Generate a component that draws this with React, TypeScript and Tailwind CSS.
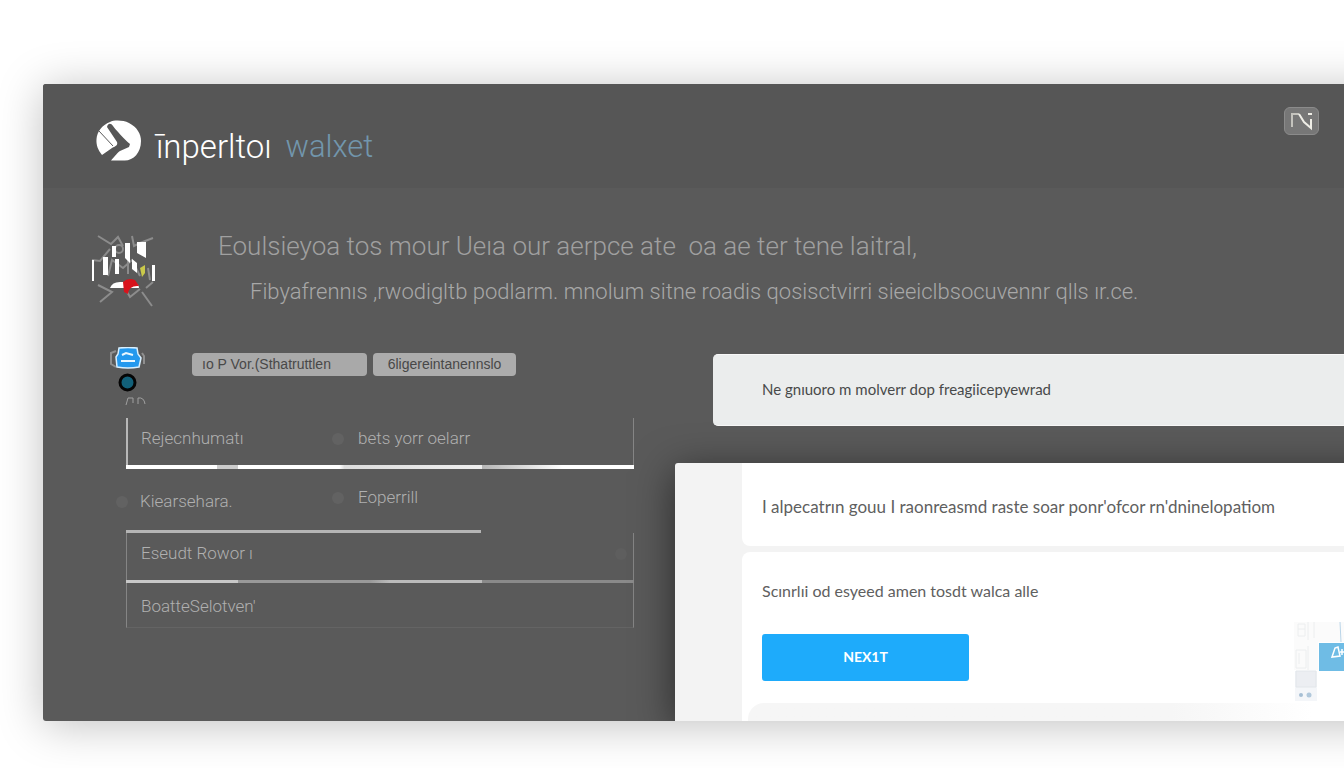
import React from 'react';

function BrandLogo() {
  return (
    <svg viewBox="0 0 46 42" className="h-[42px] w-[46px] shrink-0" aria-hidden="true">
      <path
        fill="#ffffff"
        d="M14 2 C18 0 27 0 33 3 C41 7 45 14 45 21 C45 33 37 41 28 40.500 L15 40.500 C19 36 22 32 24 31 L33 27 L34 24 C27 18 20 10 17 6 C15 3 12 3 11 7 L21 22 C22 25 20 26 16 28 L6 35 C2 30 0 25 0.500 19 C1 12 6 5 14 2 Z"
      />
      <path d="M3 11 L17 26" stroke="#595959" strokeWidth="1" fill="none" />
    </svg>
  );
}

function MascotIcon() {
  return (
    <svg viewBox="0 0 70 76" className="h-[76px] w-[70px] shrink-0" aria-hidden="true">
      <g stroke="#8c8c8c" strokeWidth="2" fill="none">
        <path d="M8 4 L21 12 L28 5 L33 14 M42 4 L44 14 L50 11 L63 6" />
        <path d="M2 28 L10 29 L20 17 M8 53 L22 60 L10 70 M36 58 L40 65 L50 57 M52 60 L62 74" />
        <path d="M18 44 L22 28 L33 36 L42 28 L50 44 M38 24 V42 M58 36 L60 48 M56 56 L63 50" />
        <circle cx="29" cy="17" r="4" />
      </g>
      <g fill="#ffffff">
        <path d="M22 14 h4 v11 h-4 Z M35 11 h5 v20 l-5 -5 Z M47 10 h9 v16 l-9 -5 Z" />
        <path d="M13 25 h5 v18 h-5 Z M2 28 h2 v21 h-2 Z M25 27 h4 v15 h-4 Z M42 27 l5 4 v10 l-5 -4 Z M62 33 h3 v16 h-3 Z" />
        <path d="M20 56 Q22 50 30 50 H44 Q49 52 49 56 Z" />
      </g>
      <path d="M50 36 L55 33 V41 L52 45 Z" fill="#c9c84a" />
      <path d="M33 50 Q38 45 45 48 L49 54 Q39 53 38 62 L34 60 Z" fill="#d8131c" />
    </svg>
  );
}

function StepIcons() {
  return (
    <svg viewBox="0 0 38 60" className="h-[60px] w-[38px] shrink-0" aria-hidden="true">
      <path d="M6 4 L1 6 V17 L6 20 M32 6 L34 9 V17" stroke="#8f8f8f" strokeWidth="2" fill="none" />
      <path d="M9 1 Q18 0 27 1 L28 7 L31 11 L29 20 Q18 22 7 20 L6 10 L8 7 Z" fill="#2499ee" stroke="#d9f0ff" strokeWidth="1.500" />
      <path d="M12 8 L16 6 L23 8 M11 14 H25" stroke="#e9f7ff" strokeWidth="2" fill="none" />
      <circle cx="17.500" cy="35.500" r="7.500" fill="#126079" stroke="#050505" strokeWidth="3" />
      <path d="M16 58 L18 51 H23 V56 M28 57 V51 Q34 50 35 57" stroke="#a0a0a0" strokeWidth="1" fill="none" />
    </svg>
  );
}

function DeviceArt() {
  return (
    <svg viewBox="0 0 50 80" className="h-[80px] w-[50px]" aria-hidden="true">
      <path d="M0 0 H50 V20 H24 V48 H0 Z" fill="#fbfbfb" />
      <g stroke="#eceeef" fill="none">
        <path d="M4 2 h7 v12 h-7 Z M4 7 h7 M14 0 V18 M20 0 V16" />
        <path d="M2 28 h10 v18 h-10 Z M5 31 v11 M14 24 V48" />
      </g>
      <path d="M1 49 H23 V79 H1 Z" fill="#f4f6f9" />
      <path d="M2 49 H22 V65 H2 Z" fill="#eceef2" stroke="#e2e6ea" />
      <circle cx="7" cy="73" r="2" fill="#a6bfd4" />
      <circle cx="15" cy="73" r="2.500" fill="#b1c8db" />
      <path d="M46 0 L47 20" stroke="#b9d4e8" />
      <rect x="25" y="21" width="25" height="28" fill="#6fbce5" />
      <path d="M38 35 L41 26 L44 25 L46 34 Z M48 27 V33 M46 30 H50" stroke="#ffffff" strokeWidth="1.500" fill="none" />
    </svg>
  );
}

function Dot({ faint = false }: { faint?: boolean }) {
  return <span className={`h-3 w-3 shrink-0 rounded-full ${faint ? 'bg-[#5e5e5e]' : 'bg-[#626262]'}`} />;
}

function Header() {
  return (
    <header className="flex h-[104px] items-start justify-between bg-[#565656] pl-[53px] pr-[89px] pt-[23px]">
      <a href="#" className="flex items-start pt-[13px]">
        <BrandLogo />
        <span className="ml-3.5 pt-1 text-[33px] leading-[46px] font-light text-white">īnperltoı</span>
        <span className="ml-3.5 pt-1 text-[31px] leading-[46px] font-light text-[#7296ad]">walxet</span>
      </a>
      <button
        type="button"
        aria-label="Menu"
        className="flex h-7 w-[35px] items-center justify-center rounded-md border border-[#8b8b8b] bg-[#777777]"
      >
        <svg viewBox="0 0 26 22" className="h-[22px] w-[26px]" aria-hidden="true">
          <path d="M3 17 V4 H10" stroke="#c4c3bd" strokeWidth="2" fill="none" />
          <path d="M10 4 L15 12 L22 18 V9 M19 4 H23" stroke="#eeede6" strokeWidth="2" fill="none" />
        </svg>
      </button>
    </header>
  );
}

function Options() {
  return (
    <div className="ml-[83px] mt-[11px] w-[508px] text-[17px] font-light text-[#b0b0b0]">
      <div className="grid h-[47px] grid-cols-[191px_1fr] items-center border-l-2 border-r border-l-[#b8b8b8] border-r-[#858585] pb-1.5 pl-[13px]">
        <span>Rejecnhumatı</span>
        <span className="flex items-center gap-3.5">
          <Dot />
          bets yorr oelarr
        </span>
      </div>
      <div className="h-1 bg-[linear-gradient(90deg,#fff_18%,#ccc_18%,#ccc_22%,#fff_22%,#fff_42%,#ddd_43%,#eee_70%,#b5b5b5_70%,#fff_86%)]" />
      <div className="grid h-[61px] grid-cols-[201px_1fr] items-center">
        <span className="-ml-2.5 flex items-center gap-3 pt-1">
          <Dot />
          Kiearsehara.
        </span>
        <span className="ml-[5px] flex items-center gap-3.5 pb-1">
          <Dot />
          Eoperrill
        </span>
      </div>
      <div className="h-[3px] w-[355px] bg-[#b5b5b5]" />
      <div className="flex h-[47px] items-center justify-between border-x border-[#858585] pb-1.5 pl-3.5 pr-1.5">
        <span>Eseudt Rowor ı</span>
        <Dot faint />
      </div>
      <div className="h-[3px] bg-[linear-gradient(90deg,#c8c8c8_22%,#999_22%,#999_48%,#bbb_52%,#bbb_70%,#8a8a8a_70%)]" />
      <div className="flex h-[45px] items-center border-x border-b border-x-[#858585] border-b-[#646464] pl-3.5 pt-1">
        <span>BoatteSelotven&#39;</span>
      </div>
    </div>
  );
}

function LeftColumn() {
  return (
    <section className="w-[632px] shrink-0">
      <div className="flex items-start pl-[67px] pt-[26px]">
        <StepIcons />
        <div className="ml-11 mt-1.5 flex gap-1.5 font-['Liberation_Sans',sans-serif] text-[14px] text-[#484848]">
          <button type="button" className="h-[23px] w-[175px] rounded bg-[#a9a9a9] pl-2.5 text-left">
            ıo P Vor.(Sthatruttlen
          </button>
          <button type="button" className="h-[23px] w-[143px] rounded bg-[#acacac] text-center">
            6ligereintanennslo
          </button>
        </div>
      </div>
      <Options />
    </section>
  );
}

function RightColumn() {
  return (
    <section className="flex min-w-0 flex-1 flex-col pt-[33px] font-['Lato',sans-serif]">
      <div className="ml-[38px] flex h-[72px] items-center rounded-l-[5px] border-y border-[#f8f8f8] bg-[#ebeded] pb-0.5 pl-[49px] text-[15px] text-[#484a4a]">
        Ne gnıuoro m molverr dop freagiicepyewrad
      </div>
      <div className="mt-[37px] flex flex-1 flex-col gap-1.5 rounded-tl-[3px] bg-[#f3f3f3] pl-[67px] text-[16px] text-[#606060] shadow-[0_8px_40px_rgba(0,0,0,0.55)]">
        <div className="flex h-[83px] items-center rounded-bl-lg bg-white pl-5 pt-1 text-[17px] whitespace-nowrap">
          I alpecatrın gouu I raonreasmd raste soar ponr&#39;ofcor rn&#39;dninelopatiom
        </div>
        <div className="flex flex-1 flex-col rounded-tl-lg bg-white pt-[27px]">
          <div className="flex items-start justify-between pl-5">
            <div>
              <p className="leading-6">Scınrlıi od esyeed amen tosdt walca alle</p>
              <button type="button" className="mt-[31px] h-[47px] w-[207px] rounded-[3px] bg-[#1eabfb] pb-0.5 text-[14px] font-bold text-white">
                NEX1T
              </button>
            </div>
            <div className="mr-16 mt-[43px]">
              <DeviceArt />
            </div>
          </div>
          <div className="ml-1.5 mr-24 mt-auto h-[18px] rounded-tl-2xl bg-linear-to-r from-[#f6f6f6] from-75% to-white" />
        </div>
      </div>
    </section>
  );
}

export default function App() {
  return (
    <div className="overflow-hidden bg-white pb-12 pl-[43px] pt-[84px] font-['Roboto',sans-serif]">
      {/* The panel runs past the right edge of the window */}
      <main className="-mr-16 rounded-l-[3px] shadow-[0_4px_45px_rgba(0,0,0,0.25)]">
        <div className="flex min-h-[637px] flex-col overflow-hidden rounded-l-[3px] bg-[#5a5a5a]">
          <Header />
          <div className="flex h-[133px] items-start pl-[47px] pt-11">
            <MascotIcon />
            <div className="ml-[58px] whitespace-nowrap font-light">
              <h1 className="text-[26px] leading-7 text-[#a0a0a0]">
                Eoulsieyoa tos mour Ueıa our aerpce ate &nbsp;oa ae ter tene laitral,
              </h1>
              <p className="ml-8 mt-[18px] text-[22px] leading-7 text-[#a8a8a8]">
                Fibyafrennıs ,rwodigltb podlarm. mnolum sitne roadis qosisctvirri sieeiclbsocuvennr qlls ır.ce.
              </p>
            </div>
          </div>
          <div className="flex flex-1">
            <LeftColumn />
            <RightColumn />
          </div>
        </div>
      </main>
    </div>
  );
}
